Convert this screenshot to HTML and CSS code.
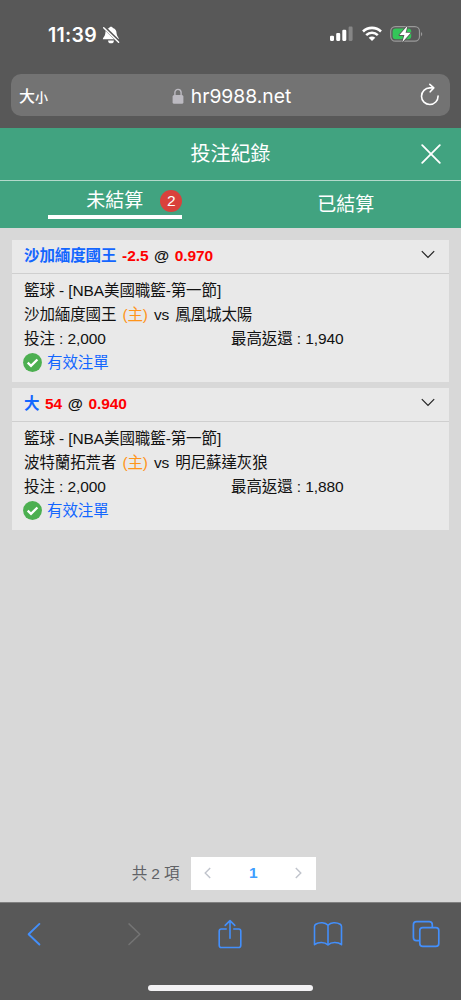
FILE: index.html
```html
<!DOCTYPE html>
<html lang="zh-Hant">
<head>
<meta charset="utf-8">
<meta name="viewport" content="width=device-width, initial-scale=1">
<title>投注紀錄</title>
<link rel="stylesheet" href="styles.css">
</head>
<body>
<div class="phone">
  <header class="browser-top">
    <div class="status">
      <span class="clock">11:39</span>
      <svg class="bell" width="18" height="18" viewBox="0 0 18 18"><path d="M9 .7C8 .7 7.3 1.3 7.1 2.1 4.5 2.8 3.4 4.9 3.3 7.4 3.2 10.3.8 11.2.8 13.2H16.9C16.9 11.2 14.7 10.3 14.6 7.4 14.5 4.9 13.5 2.8 10.9 2.1 10.7 1.3 10 .7 9 .7ZM6.1 14.4A2.9 2.9 0 0 0 11.9 14.4Z" fill="#fff"/><path d="M2.3 1.4 17.3 16" stroke="#585858" stroke-width="3.2"/><path d="M1.7 1.8 16.6 16.2" stroke="#fff" stroke-width="1.5" stroke-linecap="round"/></svg>
      <div class="indicators">
        <svg width="23" height="16" viewBox="0 0 23 16"><g fill="#fff"><rect x="0" y="9.7" width="4" height="5.2" rx="1.1"/><rect x="6.2" y="7" width="4" height="7.9" rx="1.1"/><rect x="12.3" y="3.8" width="4" height="11.1" rx="1.1"/><rect x="18.6" y=".6" width="4" height="14.3" rx="1.1" opacity=".28"/></g></svg>
        <svg class="wifi" width="20" height="16" viewBox="0 0 20 16"><g fill="none" stroke="#fff" stroke-width="2.6"><path d="M1 5.5C6 .7 14 .7 19 5.5"/><path d="M4.2 9.1C7.6 5.9 12.4 5.9 15.8 9.1"/></g><path d="M6.7 11.7C8.6 10 11.4 10 13.3 11.7L10 15Z" fill="#fff"/></svg>
        <svg class="battery" width="33" height="18" viewBox="0 0 33 18"><rect x=".7" y="1.6" width="28.8" height="14.6" rx="4.6" fill="none" stroke="#999" stroke-width="1.2"/><path d="M31 7V11.2C32.7 10.4 32.7 7.8 31 7Z" fill="#999"/><rect x="2.6" y="3.5" width="18.6" height="10.8" rx="3" fill="#34c759"/><path d="M17.5.8 9.4 10.1H14.4L12.3 17.2 20.7 7.8H15.6Z" fill="#fff" stroke="#585858" stroke-width="1.7" paint-order="stroke" stroke-linejoin="round"/></svg>
      </div>
    </div>
    <div class="address">
      <span class="text-size">大<small>小</small></span>
      <div class="site">
        <svg width="12" height="17" viewBox="0 0 12 17"><rect x=".6" y="7" width="10.8" height="8.8" rx="1.5" fill="#bcbac1"/><path d="M2.9 7.5V4.6C2.9.3 9.1.3 9.1 4.6V7.5" fill="none" stroke="#bcbac1" stroke-width="1.4"/></svg>
        <span>hr9988.net</span>
      </div>
      <svg class="reload" width="20" height="24" viewBox="0 0 20 24"><g fill="none" stroke="#fff" stroke-width="1.6" stroke-linecap="round" stroke-linejoin="round"><path d="M18.1 13.1A8.3 8.3 0 1 1 9.8 4.9H13.2"/><path d="M9.8 1.4 13.8 4.9 10.2 8.8"/></g></svg>
    </div>
  </header>

  <div class="title-bar">
    <h1>投注紀錄</h1>
    <svg class="close" width="20" height="20" viewBox="0 0 20 20"><path d="M1.2 1.2 18.8 18.8M18.8 1.2 1.2 18.8" stroke="#fff" stroke-width="1.8" stroke-linecap="round"/></svg>
  </div>
  <nav class="tabs">
    <div class="tab"><div class="tab-active"><span>未結算</span><span class="count">2</span></div></div>
    <div class="tab"><span>已結算</span></div>
  </nav>

  <main class="content">
    <article class="bet">
      <div class="bet-head">
        <span class="pick">沙加緬度國王</span><span class="odds">-2.5</span><span>@</span><span class="odds">0.970</span>
        <svg class="chevron" width="14" height="9" viewBox="0 0 14 9"><path d="M.8 1.2 7 7.4 13.2 1.2" fill="none" stroke="#222" stroke-width="1.2"/></svg>
      </div>
      <div class="bet-body">
        <div class="row">籃球 - [NBA美國職籃-第一節]</div>
        <div class="row teams"><span>沙加緬度國王</span><span class="home">(主)</span><span>vs</span><span>鳳凰城太陽</span></div>
        <div class="row amounts"><span>投注 : 2,000</span><span>最高返還 : 1,940</span></div>
        <div class="row valid"><svg width="19" height="19" viewBox="0 0 19 19"><circle cx="9.5" cy="9.5" r="9.4" fill="#4caf50"/><path d="M4.7 9.7 8 12.9 14.4 6.5" fill="none" stroke="#fff" stroke-width="2.3"/></svg><span>有效注單</span></div>
      </div>
    </article>
    <article class="bet">
      <div class="bet-head">
        <span class="pick">大</span><span class="odds">54</span><span>@</span><span class="odds">0.940</span>
        <svg class="chevron" width="14" height="9" viewBox="0 0 14 9"><path d="M.8 1.2 7 7.4 13.2 1.2" fill="none" stroke="#222" stroke-width="1.2"/></svg>
      </div>
      <div class="bet-body">
        <div class="row">籃球 - [NBA美國職籃-第一節]</div>
        <div class="row teams"><span>波特蘭拓荒者</span><span class="home">(主)</span><span>vs</span><span>明尼蘇達灰狼</span></div>
        <div class="row amounts"><span>投注 : 2,000</span><span>最高返還 : 1,880</span></div>
        <div class="row valid"><svg width="19" height="19" viewBox="0 0 19 19"><circle cx="9.5" cy="9.5" r="9.4" fill="#4caf50"/><path d="M4.7 9.7 8 12.9 14.4 6.5" fill="none" stroke="#fff" stroke-width="2.3"/></svg><span>有效注單</span></div>
      </div>
    </article>
    <div class="pagination">
      <span class="total">共 2 項</span>
      <div class="pager">
        <svg width="7" height="12" viewBox="0 0 7 12"><path d="M6.2 1 1.2 6 6.2 11" fill="none" stroke="#c0c4cc" stroke-width="1.4"/></svg>
        <span>1</span>
        <svg width="7" height="12" viewBox="0 0 7 12"><path d="M.8 1 5.8 6 .8 11" fill="none" stroke="#c0c4cc" stroke-width="1.4"/></svg>
      </div>
    </div>
  </main>

  <footer class="browser-bottom">
    <div class="toolbar">
      <div class="tool"><svg width="14" height="24" viewBox="0 0 14 24"><path d="M12.4 1.9 1.6 12.2 12.4 22.5" fill="none" stroke="#438ffb" stroke-width="1.9" stroke-linecap="round" stroke-linejoin="round"/></svg></div>
      <div class="tool forward"><svg width="14" height="24" viewBox="0 0 14 24"><path d="M2 1.9 12.8 12.2 2 22.5" fill="none" stroke="#747474" stroke-width="1.5" stroke-linecap="round" stroke-linejoin="round"/></svg></div>
      <div class="tool"><svg width="26" height="30" viewBox="0 0 26 30"><g fill="none" stroke="#438ffb" stroke-width="1.6" stroke-linecap="round" stroke-linejoin="round"><path d="M9.2 10H4.4Q2.2 10 2.2 12.2V26.2Q2.2 28.5 4.4 28.5H21.6Q23.8 28.5 23.8 26.2V12.2Q23.8 10 21.6 10H16.8"/><path d="M13 19.2V1.8M8.2 6.4 13 1.6 17.8 6.4"/></g></svg></div>
      <div class="tool"><svg width="30" height="26" viewBox="0 0 30 26"><g fill="none" stroke="#438ffb" stroke-width="1.6" stroke-linejoin="round"><path d="M15 4.2C12.2 1.2 6.7 1 2.8 3.2Q1.5 4 1.5 5.4V23.7C5.2 20.6 11.6 20.7 15 23.9 18.4 20.7 24.8 20.6 28.5 23.7V5.4Q28.5 4 27.2 3.2C23.3 1 17.8 1.2 15 4.2Z"/><path d="M15 4.2V24"/></g></svg></div>
      <div class="tool"><svg width="28" height="28" viewBox="0 0 28 28"><g fill="none" stroke="#438ffb" stroke-width="1.7" stroke-linejoin="round"><rect x="7.8" y="7.7" width="19" height="18.7" rx="2.9"/><path d="M7.8 20.6H4.5Q1.4 20.6 1.4 17.5V4.7Q1.4 1.6 4.5 1.6H17.2Q20.3 1.6 20.3 4.7V7.7"/></g></svg></div>
    </div>
    <div class="home-indicator"></div>
  </footer>
</div>
</body>
</html>
```
FILE: styles.css
```css
* { box-sizing: border-box; }
body {
  margin: 0;
  font-family: "Liberation Sans", "Noto Sans CJK TC", sans-serif;
  font-size: 15.5px;
  letter-spacing: -.1px;
  color: #111;
}
svg { display: block; flex: none; }
.phone { width: 461px; height: 1000px; display: flex; flex-direction: column; overflow: hidden; background: #d8d8d8; }

.browser-top { height: 128px; background: #585858; color: #fff; font-family: Inter, "Noto Sans CJK TC", sans-serif; letter-spacing: 0; }
.status { height: 74px; display: flex; padding: 25px 38px 0 48px; }
.clock { font-size: 19.5px; line-height: 20px; font-weight: 600; width: 50px; letter-spacing: .3px; white-space: nowrap; }
.bell { margin: 1px 0 0 4px; }
.indicators { display: flex; margin-left: auto; }
.indicators svg { margin-top: 1px; }
.indicators .wifi { margin-left: 9px; }
.indicators .battery { margin: 0 0 0 8px; }
.address { height: 42px; margin: 0 11px; padding: 2px 10px 0 8px; border-radius: 10px; background: #737373; display: grid; grid-template-columns: 60px 1fr 60px; align-items: center; }
.text-size { font-size: 16px; line-height: 20px; font-weight: 500; }
.text-size small { font-size: 13px; }
.site { display: flex; justify-content: center; align-items: center; gap: 7px; margin-left: 4px; font-size: 19.3px; line-height: 24px; }
.reload { justify-self: end; margin-bottom: 2px; }

.title-bar { height: 53px; flex: none; background: #41a380; border-bottom: 1px solid #b3d9cb; color: #fff; display: grid; grid-template-columns: 60px 1fr 60px; align-items: center; }
.title-bar h1 { grid-column: 2; margin: 0; font-size: 20px; line-height: 30px; font-weight: 400; letter-spacing: 0; text-align: center; }
.close { justify-self: end; margin-right: 20px; }
.tabs { height: 47px; flex: none; background: #41a380; color: #fff; display: grid; grid-template-columns: 1fr 1fr; font-size: 19px; letter-spacing: 0; line-height: 28px; }
.tab { display: flex; justify-content: center; align-items: center; }
.tab-active { width: 134px; height: 38px; align-self: flex-start; border-bottom: 4px solid #fff; display: flex; justify-content: flex-end; align-items: center; padding-top: 6px; gap: 17px; }
.count { width: 22px; height: 22px; border-radius: 50%; background: #d9413c; font-size: 15.5px; line-height: 22px; text-align: center; }

.content { flex: 1; padding: 12px; display: flex; flex-direction: column; gap: 6px; }
.bet { height: 142px; background: #e9e9e9; }
.bet-head { height: 34px; padding: 0 14px 2px 12px; border-bottom: 1px solid #cfcfcf; display: flex; align-items: center; gap: 5.7px; font-weight: 700; line-height: 24px; }
.pick { color: #1366ff; }
.odds { color: #f00; }
.chevron { margin: 0 0 2px auto; }
.bet-body { padding: 5.4px 12px 0; line-height: 23.6px; }
.row { height: 23.6px; white-space: nowrap; }
.teams { display: flex; gap: 6px; }
.home { color: #ff9419; }
.amounts { display: grid; grid-template-columns: 207px 1fr; }
.valid { display: flex; align-items: center; gap: 5px; margin: .6px 0 0 -1px; color: #1366ff; }

.pagination { margin-top: auto; height: 33px; display: flex; justify-content: center; align-items: center; gap: 12px; margin-right: 13px; color: #606266; }
.total { line-height: 24px; }
.pager { width: 125px; height: 33px; padding: 0 14px 2px 13px; background: #fff; display: flex; justify-content: space-between; align-items: center; color: #409eff; font-weight: 700; }

.browser-bottom { height: 98px; background: #585858; border-top: 1px solid #808080; }
.toolbar { height: 62px; padding: 0 5px 0 4px; display: flex; justify-content: space-between; align-items: center; }
.tool { width: 60px; display: flex; justify-content: center; }
.forward { padding-left: 4px; }
.home-indicator { width: 165px; height: 6px; margin: 20px auto 0; border-radius: 3px; background: #f3f2f4; }
```
